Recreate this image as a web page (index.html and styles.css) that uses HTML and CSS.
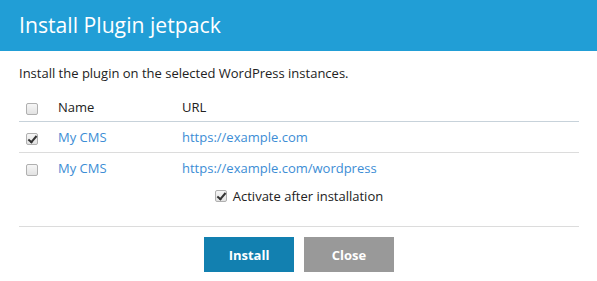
FILE: index.html
```html
<!DOCTYPE html>
<html>
<head>
<meta charset="utf-8">
<link rel="stylesheet" href="styles.css">
</head>
<body>
<div class="dialog">
  <div class="header"><h1 class="title">Install Plugin jetpack</h1></div>
  <div class="content">
    <p class="desc">Install the plugin on the selected WordPress instances.</p>
    <table class="grid">
      <thead>
        <tr>
          <th class="c-check"><input type="checkbox" class="cb"></th>
          <th class="c-name">Name</th>
          <th>URL</th>
        </tr>
      </thead>
      <tbody>
        <tr class="row">
          <td class="c-check"><input type="checkbox" class="cb" checked></td>
          <td class="c-name"><a href="#" class="link">My CMS</a></td>
          <td><a href="#" class="link">https://example.com</a></td>
        </tr>
        <tr class="row last">
          <td class="c-check"><input type="checkbox" class="cb"></td>
          <td class="c-name"><a href="#" class="link">My CMS</a></td>
          <td><a href="#" class="link">https://example.com/wordpress</a></td>
        </tr>
      </tbody>
    </table>
    <label class="activate"><input type="checkbox" class="cb" checked><span>Activate after installation</span></label>
    <div class="footer">
      <button class="btn btn-primary">Install</button>
      <button class="btn btn-secondary">Close</button>
    </div>
  </div>
</div>
</body>
</html>
```

FILE: styles.css
```css
html, body {
  margin: 0;
  padding: 0;
  background: #fff;
}
body {
  font-family: "Open Sans", "Liberation Sans", sans-serif;
  font-size: 13px;
  color: #222;
}
.header {
  background: #219ed6;
  height: 51px;
  padding: 0 19px;
  display: flex;
  align-items: center;
}
.title {
  margin: 0;
  font-size: 21.2px;
  font-weight: 400;
  color: #fff;
  line-height: 1;
  padding-bottom: 1px;
}
.content {
  padding: 0 18px 0 19px;
}
.desc {
  margin: 0;
  padding-top: 13px;
  line-height: 18px;
}
.grid {
  width: 100%;
  border-collapse: collapse;
  margin-top: 9px;
}
.grid th, .grid td {
  height: 30px;
  padding: 0;
  text-align: left;
  font-weight: 400;
  vertical-align: middle;
}
.grid thead th {
  height: 28px;
  padding-top: 2px;
}
.grid thead tr {
  border-bottom: 1px solid #c7d2da;
}
.grid .row {
  border-bottom: 1px solid #dcdcdc;
}
.grid .row.last {
  border-bottom: none;
}
.grid .c-check {
  width: 32px;
  padding-left: 7px;
}
.c-name {
  width: 124px;
}
.link {
  color: #3c8dd5;
  text-decoration: none;
}
.cb {
  appearance: none;
  -webkit-appearance: none;
  width: 12px;
  height: 12px;
  margin: 0;
  border: 1px solid #b0b0b0;
  border-radius: 2px;
  background: linear-gradient(#f6f6f6, #e2e2e2);
  box-sizing: border-box;
  position: relative;
  display: inline-block;
  vertical-align: middle;
}
.cb:checked::after {
  content: "";
  position: absolute;
  left: 3px;
  top: 0px;
  width: 3px;
  height: 7px;
  border: solid #333;
  border-width: 0 2px 2px 0;
  transform: rotate(40deg);
}
.activate {
  display: flex;
  justify-content: center;
  align-items: center;
  gap: 6px;
  height: 26px;
}
.footer {
  border-top: 1px solid #dcdcdc;
  margin-top: 17px;
  padding-top: 10px;
  display: flex;
  justify-content: center;
  gap: 10px;
}
.btn {
  width: 90px;
  height: 35px;
  border: none;
  font-family: "Open Sans", "Liberation Sans", sans-serif;
  font-size: 13px;
  font-weight: 700;
  color: #fff;
  padding: 0;
}
.btn-primary {
  background: #1280b0;
}
.btn-secondary {
  background: #999;
}
```
